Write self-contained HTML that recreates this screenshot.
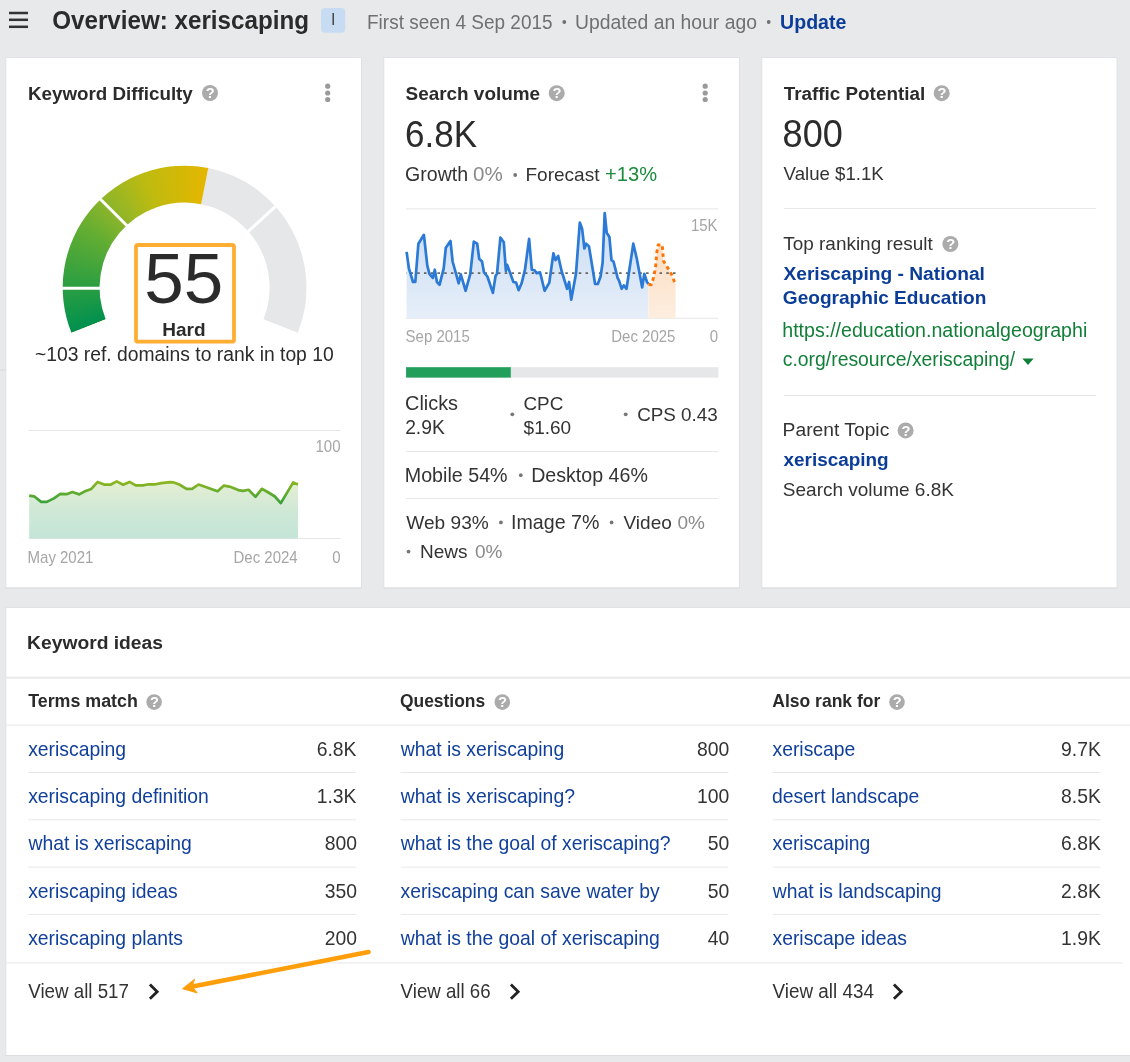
<!DOCTYPE html>
<html><head><meta charset="utf-8"><style>
html,body{margin:0;padding:0;background:#e8e9eb;width:1130px;height:1062px;overflow:hidden}
body{position:relative}
.ov{position:absolute;left:0;top:0}
svg{display:block;font-family:"Liberation Sans",sans-serif;will-change:transform}
</style></head><body>
<svg width="1130" height="1062" viewBox="0 0 1130 1062">
<rect x="9" y="11.75" width="19" height="2.5" fill="#333" />
<rect x="9" y="18.55" width="19" height="2.5" fill="#333" />
<rect x="9" y="25.55" width="19" height="2.5" fill="#333" />
<text x="52.21" y="28.60" font-size="24.2" font-weight="bold" fill="#2b2b2b"  transform="matrix(1 0 0 1.06 0 -1.716)">Overview: xeriscaping</text>
<rect x="321" y="8" width="24.3" height="24.7" fill="#c7dcf3" rx="4"/>
<text x="333.20" y="25.30" font-size="16" font-weight="normal" fill="#444" text-anchor="middle" >I</text>
<text x="367.04" y="28.80" font-size="18.97" font-weight="normal" fill="#707070"  transform="matrix(1 0 0 1.08 0 -2.304)">First seen 4 Sep 2015</text>
<circle cx="564.3" cy="22.0" r="1.9" fill="#707070"/>
<text x="575.11" y="28.80" font-size="19.37" font-weight="normal" fill="#707070"  transform="matrix(1 0 0 1.08 0 -2.304)">Updated an hour ago</text>
<circle cx="768.7" cy="22.0" r="1.9" fill="#707070"/>
<text x="780.13" y="28.80" font-size="19.55" font-weight="bold" fill="#0b3d98"  transform="matrix(1 0 0 1.08 0 -2.304)">Update</text>
<rect x="5.8" y="57.5" width="355.7" height="530.5" fill="#fff" stroke="#e1e2e5" stroke-width="1"/>
<rect x="5.3" y="587.6" width="356.7" height="1" fill="#dcdde0" />
<rect x="383.8" y="57.5" width="355.6" height="530.5" fill="#fff" stroke="#e1e2e5" stroke-width="1"/>
<rect x="383.3" y="587.6" width="356.6" height="1" fill="#dcdde0" />
<rect x="761.8" y="57.5" width="355.2" height="530.5" fill="#fff" stroke="#e1e2e5" stroke-width="1"/>
<rect x="761.3" y="587.6" width="356.2" height="1" fill="#dcdde0" />
<rect x="5.8" y="607.5" width="1130" height="448" fill="#fff" stroke="#e1e2e5" stroke-width="1"/>
<rect x="5.3" y="1055.1" width="1125" height="1" fill="#dcdde0" />
<rect x="0" y="369.6" width="5" height="1" fill="#d6d7d9" />
<text x="27.94" y="100.30" font-size="18.8" font-weight="bold" fill="#2b2b2b" >Keyword Difficulty</text>
<circle cx="210" cy="93" r="8" fill="#ababab"/>
<text x="210.3" y="98.2" font-size="14.7" font-weight="bold" fill="#fff" text-anchor="middle">?</text>
<circle cx="327.7" cy="86.2" r="2.6" fill="#9a9a9a"/>
<circle cx="327.7" cy="93" r="2.6" fill="#9a9a9a"/>
<circle cx="327.7" cy="99.5" r="2.6" fill="#9a9a9a"/>
<path d="M208.28,168.02 A121.9,121.9 0 0 1 297.78,332.87 L263.52,319.17 A85.0,85.0 0 0 0 201.11,204.22 Z" fill="#e6e7e9"/>
<rect x="136" y="245" width="98" height="96.7" rx="2" fill="#fff" stroke="#ffad33" stroke-width="3.8"/>
<text x="144.26" y="302.70" font-size="71" font-weight="normal" fill="#2b2b2b" >55</text>
<text x="162.23" y="335.90" font-size="19" font-weight="bold" fill="#2b2b2b" >Hard</text>
<text x="34.93" y="361.00" font-size="19.31" font-weight="normal" fill="#2b2b2b" >~103 ref. domains to rank in top 10</text>
<line x1="28.6" y1="430.5" x2="340.6" y2="430.5" stroke="#e6e6e6" stroke-width="1" />
<line x1="28.6" y1="538.5" x2="340.6" y2="538.5" stroke="#e6e6e6" stroke-width="1" />
<defs><linearGradient id="kdfill" x1="0" y1="478" x2="0" y2="538" gradientUnits="userSpaceOnUse"><stop offset="0" stop-color="#e8f0d2"/><stop offset="0.55" stop-color="#cfe8d6"/><stop offset="1" stop-color="#c3e5d7"/></linearGradient><linearGradient id="kdline" x1="0" y1="480" x2="0" y2="504" gradientUnits="userSpaceOnUse"><stop offset="0" stop-color="#93b81e"/><stop offset="1" stop-color="#35a03e"/></linearGradient></defs>
<path d="M29.2,538.5 L29.2,495.6 34.1,496.3 41.2,501.9 46.8,501.9 53.9,498.4 60.3,493.9 66.6,494.2 72.3,492.0 79.3,494.4 85.0,491.3 91.3,488.9 97.7,481.9 104.7,484.7 110.4,484.7 116.8,481.4 123.1,484.7 129.5,481.9 135.8,485.4 142.9,485.4 148.5,484.3 155.6,484.3 161.2,483.1 170.0,482.1 173.8,482.4 179.3,484.5 186.5,488.8 192.1,488.8 198.5,484.5 206.4,487.2 217.6,491.2 223.9,485.6 229.5,486.6 238.3,490.1 243.0,490.9 248.6,489.8 255.5,496.8 261.8,488.8 268.5,492.5 274.9,496.5 280.8,503.1 293.2,482.4 298.0,484.5 L298,538.5 Z" fill="url(#kdfill)"/>
<polyline points="29.2,495.6 34.1,496.3 41.2,501.9 46.8,501.9 53.9,498.4 60.3,493.9 66.6,494.2 72.3,492.0 79.3,494.4 85.0,491.3 91.3,488.9 97.7,481.9 104.7,484.7 110.4,484.7 116.8,481.4 123.1,484.7 129.5,481.9 135.8,485.4 142.9,485.4 148.5,484.3 155.6,484.3 161.2,483.1 170.0,482.1 173.8,482.4 179.3,484.5 186.5,488.8 192.1,488.8 198.5,484.5 206.4,487.2 217.6,491.2 223.9,485.6 229.5,486.6 238.3,490.1 243.0,490.9 248.6,489.8 255.5,496.8 261.8,488.8 268.5,492.5 274.9,496.5 280.8,503.1 293.2,482.4 298.0,484.5" fill="none" stroke="url(#kdline)" stroke-width="2.7" stroke-linejoin="round"/>
<text x="340.49" y="452.30" font-size="15" font-weight="normal" fill="#a6a6a6" text-anchor="end"  transform="matrix(1 0 0 1.09 0 -40.707)">100</text>
<text x="27.57" y="563.40" font-size="15" font-weight="normal" fill="#a6a6a6"  transform="matrix(1 0 0 1.09 0 -50.706)">May 2021</text>
<text x="297.64" y="563.40" font-size="15" font-weight="normal" fill="#a6a6a6" text-anchor="end"  transform="matrix(1 0 0 1.09 0 -50.706)">Dec 2024</text>
<text x="340.49" y="563.40" font-size="15" font-weight="normal" fill="#a6a6a6" text-anchor="end"  transform="matrix(1 0 0 1.09 0 -50.706)">0</text>
<text x="405.55" y="99.80" font-size="18.92" font-weight="bold" fill="#2b2b2b" >Search volume</text>
<circle cx="556.7" cy="93.2" r="8" fill="#ababab"/>
<text x="557.0" y="98.4" font-size="14.7" font-weight="bold" fill="#fff" text-anchor="middle">?</text>
<circle cx="705.2" cy="86.2" r="2.6" fill="#9a9a9a"/>
<circle cx="705.2" cy="93" r="2.6" fill="#9a9a9a"/>
<circle cx="705.2" cy="99.5" r="2.6" fill="#9a9a9a"/>
<text x="405.12" y="147.20" font-size="35" font-weight="normal" fill="#2b2b2b"  transform="matrix(1 0 0 1.05 0 -7.360)">6.8K</text>
<text x="405.12" y="181.20" font-size="19.56" font-weight="normal" fill="#333" >Growth</text>
<text x="473.00" y="181.20" font-size="20.57" font-weight="normal" fill="#8a8a8a" >0%</text>
<circle cx="515.2" cy="175.0" r="1.9" fill="#777"/>
<text x="525.44" y="181.20" font-size="19.05" font-weight="normal" fill="#333" >Forecast</text>
<text x="605.12" y="181.20" font-size="20.11" font-weight="normal" fill="#1b8c3e" >+13%</text>
<line x1="406" y1="208.9" x2="718.2" y2="208.9" stroke="#e6e6e6" stroke-width="1" />
<line x1="406" y1="318.3" x2="718.2" y2="318.3" stroke="#e6e6e6" stroke-width="1" />
<defs><linearGradient id="svfill" x1="0" y1="210" x2="0" y2="318" gradientUnits="userSpaceOnUse"><stop offset="0" stop-color="#c9dcf3"/><stop offset="1" stop-color="#e6eef9"/></linearGradient><linearGradient id="fcfill" x1="0" y1="240" x2="0" y2="318" gradientUnits="userSpaceOnUse"><stop offset="0" stop-color="#fcdcc0"/><stop offset="1" stop-color="#fdeee0"/></linearGradient></defs>
<path d="M406.6,318.3 L406.6,251.9 408.9,268.3 413.0,282.0 415.3,282.0 418.4,243.7 423.9,234.8 427.3,265.6 429.4,273.8 432.8,277.9 434.8,269.7 436.9,282.0 439.6,284.7 443.7,268.3 445.8,247.8 450.5,241.0 452.6,261.5 458.7,283.3 460.8,274.4 465.6,290.8 470.3,273.8 473.8,241.7 477.2,243.7 479.2,258.7 482.0,261.5 484.0,272.4 487.4,276.5 492.9,292.9 495.6,275.8 497.0,273.8 500.4,237.6 503.8,242.3 505.9,271.0 507.2,264.9 513.4,282.0 516.1,282.6 518.6,290.2 521.6,283.3 525.0,269.7 529.1,238.9 531.8,269.7 534.5,270.3 536.6,273.1 540.0,272.4 541.1,276.5 544.6,290.8 549.3,282.6 553.4,253.3 555.5,260.1 558.2,256.0 561.6,271.0 567.1,288.8 569.1,282.0 571.2,299.7 576.0,273.8 579.8,222.5 582.1,228.7 584.4,248.5 586.2,243.7 589.0,246.4 595.1,284.0 597.8,284.0 600.6,276.5 602.6,262.8 604.7,213.0 606.7,232.8 609.4,236.9 611.5,260.1 613.5,261.5 617.6,277.9 619.0,280.6 621.7,288.8 623.8,285.4 626.5,288.8 633.3,243.7 636.8,258.7 642.2,287.4 644.3,273.8 647.0,282.0 648.4,284.0 L648.4,318.3 Z" fill="url(#svfill)"/>
<path d="M648.4,318.3 L648.5,284.2 651.3,284.7 653.6,277.4 655.3,268.9 656.1,261.0 656.7,253.1 658.1,244.9 662.3,244.9 662.9,253.1 663.5,261.0 667.7,267.8 671.7,274.6 674.5,281.9 675.4,283.5 L675.6,283.5 L675.6,318.3 Z" fill="url(#fcfill)"/>
<line x1="406" y1="273.1" x2="675.8" y2="273.1" stroke="#666" stroke-width="1.9" stroke-dasharray="2.55 4.18" stroke-dashoffset="2.23"/>
<polyline points="406.6,251.9 408.9,268.3 413.0,282.0 415.3,282.0 418.4,243.7 423.9,234.8 427.3,265.6 429.4,273.8 432.8,277.9 434.8,269.7 436.9,282.0 439.6,284.7 443.7,268.3 445.8,247.8 450.5,241.0 452.6,261.5 458.7,283.3 460.8,274.4 465.6,290.8 470.3,273.8 473.8,241.7 477.2,243.7 479.2,258.7 482.0,261.5 484.0,272.4 487.4,276.5 492.9,292.9 495.6,275.8 497.0,273.8 500.4,237.6 503.8,242.3 505.9,271.0 507.2,264.9 513.4,282.0 516.1,282.6 518.6,290.2 521.6,283.3 525.0,269.7 529.1,238.9 531.8,269.7 534.5,270.3 536.6,273.1 540.0,272.4 541.1,276.5 544.6,290.8 549.3,282.6 553.4,253.3 555.5,260.1 558.2,256.0 561.6,271.0 567.1,288.8 569.1,282.0 571.2,299.7 576.0,273.8 579.8,222.5 582.1,228.7 584.4,248.5 586.2,243.7 589.0,246.4 595.1,284.0 597.8,284.0 600.6,276.5 602.6,262.8 604.7,213.0 606.7,232.8 609.4,236.9 611.5,260.1 613.5,261.5 617.6,277.9 619.0,280.6 621.7,288.8 623.8,285.4 626.5,288.8 633.3,243.7 636.8,258.7 642.2,287.4 644.3,273.8 647.0,282.0 648.4,284.0" fill="none" stroke="#2b7ad5" stroke-width="2.7" stroke-linejoin="round"/>
<polyline points="648.5,284.2 651.3,284.7 653.6,277.4 655.3,268.9 656.1,261.0 656.7,253.1 658.1,244.9 662.3,244.9 662.9,253.1 663.5,261.0 667.7,267.8 671.7,274.6 674.5,281.9 675.4,283.5" fill="none" stroke="#ff7300" stroke-width="2.9" stroke-dasharray="3.6 3.4" stroke-linejoin="round"/>
<text x="717.57" y="230.90" font-size="15" font-weight="normal" fill="#a6a6a6" text-anchor="end"  transform="matrix(1 0 0 1.09 0 -20.781)">15K</text>
<text x="405.62" y="341.60" font-size="15" font-weight="normal" fill="#a6a6a6"  transform="matrix(1 0 0 1.09 0 -30.744)">Sep 2015</text>
<text x="675.43" y="341.60" font-size="15" font-weight="normal" fill="#a6a6a6" text-anchor="end"  transform="matrix(1 0 0 1.09 0 -30.744)">Dec 2025</text>
<text x="717.99" y="341.60" font-size="15" font-weight="normal" fill="#a6a6a6" text-anchor="end"  transform="matrix(1 0 0 1.09 0 -30.744)">0</text>
<rect x="406.1" y="367.2" width="312.3" height="10.4" fill="#e6e7e9" />
<rect x="406.1" y="367.2" width="104.7" height="10.4" fill="#22a05b" />
<text x="405.09" y="409.80" font-size="19.85" font-weight="normal" fill="#333" >Clicks</text>
<text x="405.13" y="433.80" font-size="19.29" font-weight="normal" fill="#333" >2.9K</text>
<circle cx="512.3" cy="414.3" r="1.9" fill="#777"/>
<text x="523.44" y="409.80" font-size="18.89" font-weight="normal" fill="#333" >CPC</text>
<text x="523.60" y="433.80" font-size="19.0" font-weight="normal" fill="#333" >$1.60</text>
<circle cx="625.7" cy="414.3" r="1.9" fill="#777"/>
<text x="637.14" y="420.60" font-size="18.83" font-weight="normal" fill="#333" >CPS 0.43</text>
<line x1="406" y1="451.5" x2="718.2" y2="451.5" stroke="#e8e8e8" stroke-width="1" />
<text x="404.79" y="481.50" font-size="19.68" font-weight="normal" fill="#333" >Mobile 54%</text>
<circle cx="520.8" cy="475.2" r="1.9" fill="#777"/>
<text x="531.19" y="481.50" font-size="19.61" font-weight="normal" fill="#333" >Desktop 46%</text>
<line x1="406" y1="498.5" x2="718.2" y2="498.5" stroke="#e8e8e8" stroke-width="1" />
<text x="406.32" y="528.70" font-size="19.1" font-weight="normal" fill="#333" >Web 93%</text>
<circle cx="500.9" cy="522.4" r="1.9" fill="#777"/>
<text x="511.09" y="528.70" font-size="19.61" font-weight="normal" fill="#333" >Image 7%</text>
<circle cx="611.6" cy="522.4" r="1.9" fill="#777"/>
<text x="623.52" y="528.70" font-size="19" font-weight="normal" fill="#333" >Video</text>
<text x="704.98" y="528.70" font-size="19" font-weight="normal" fill="#8a8a8a" text-anchor="end" >0%</text>
<circle cx="408.5" cy="551.6" r="1.9" fill="#777"/>
<text x="419.94" y="557.90" font-size="19" font-weight="normal" fill="#333" >News</text>
<text x="502.48" y="557.90" font-size="19" font-weight="normal" fill="#8a8a8a" text-anchor="end" >0%</text>
<text x="783.69" y="99.70" font-size="18.86" font-weight="bold" fill="#2b2b2b" >Traffic Potential</text>
<circle cx="941.7" cy="93.2" r="8" fill="#ababab"/>
<text x="942.0" y="98.4" font-size="14.7" font-weight="bold" fill="#fff" text-anchor="middle">?</text>
<text x="782.63" y="147.30" font-size="36.07" font-weight="normal" fill="#2b2b2b"  transform="matrix(1 0 0 1.05 0 -7.365)">800</text>
<text x="783.62" y="180.30" font-size="18.64" font-weight="normal" fill="#333" >Value $1.1K</text>
<line x1="784" y1="208.5" x2="1096" y2="208.5" stroke="#e8e8e8" stroke-width="1" />
<text x="783.27" y="250.10" font-size="18.94" font-weight="normal" fill="#333" >Top ranking result</text>
<circle cx="950.4" cy="244.0" r="8" fill="#ababab"/>
<text x="950.6999999999999" y="249.2" font-size="14.7" font-weight="bold" fill="#fff" text-anchor="middle">?</text>
<text x="783.43" y="279.70" font-size="19.2" font-weight="bold" fill="#0b3d98" >Xeriscaping - National</text>
<text x="782.82" y="304.00" font-size="19.08" font-weight="bold" fill="#0b3d98" >Geographic Education</text>
<text x="782.24" y="336.80" font-size="19.6" font-weight="normal" fill="#117f38" >https://education.nationalgeographi</text>
<text x="782.78" y="366.00" font-size="19.37" font-weight="normal" fill="#117f38" >c.org/resource/xeriscaping/</text>
<path d="M1022.3,358.5 L1033.7,358.5 L1028,365 Z" fill="#117f38"/>
<line x1="784" y1="395.5" x2="1096" y2="395.5" stroke="#e8e8e8" stroke-width="1" />
<text x="782.62" y="435.80" font-size="19.26" font-weight="normal" fill="#333" >Parent Topic</text>
<circle cx="905.6" cy="430.4" r="8" fill="#ababab"/>
<text x="905.9" y="435.59999999999997" font-size="14.7" font-weight="bold" fill="#fff" text-anchor="middle">?</text>
<text x="783.47" y="465.60" font-size="18.93" font-weight="bold" fill="#0b3d98" >xeriscaping</text>
<text x="782.84" y="495.70" font-size="19.0" font-weight="normal" fill="#333" >Search volume 6.8K</text>
<text x="27.11" y="648.70" font-size="19.25" font-weight="bold" fill="#2b2b2b" >Keyword ideas</text>
<rect x="6" y="676.5" width="1124" height="2.5" fill="#ececec" />
<rect x="6" y="724.6" width="1124" height="1" fill="#e8e8e8" />
<text x="28.20" y="706.90" font-size="17.84" font-weight="bold" fill="#2b2b2b" >Terms match</text>
<circle cx="154.1" cy="702.1" r="7.8" fill="#ababab"/>
<text x="154.4" y="707.3000000000001" font-size="14.7" font-weight="bold" fill="#fff" text-anchor="middle">?</text>
<text x="28.18" y="755.70" font-size="19.35" font-weight="normal" fill="#11409a" >xeriscaping</text>
<text x="356.52" y="755.70" font-size="19.35" font-weight="normal" fill="#333" text-anchor="end" >6.8K</text>
<line x1="28.4" y1="772.5" x2="356.3" y2="772.5" stroke="#e8e8e8" stroke-width="1" />
<text x="28.18" y="803.00" font-size="19.35" font-weight="normal" fill="#11409a" >xeriscaping definition</text>
<text x="356.52" y="803.00" font-size="19.35" font-weight="normal" fill="#333" text-anchor="end" >1.3K</text>
<line x1="28.4" y1="819.8" x2="356.3" y2="819.8" stroke="#e8e8e8" stroke-width="1" />
<text x="28.43" y="850.30" font-size="19.35" font-weight="normal" fill="#11409a" >what is xeriscaping</text>
<text x="357.06" y="850.30" font-size="19.35" font-weight="normal" fill="#333" text-anchor="end" >800</text>
<line x1="28.4" y1="867.1" x2="356.3" y2="867.1" stroke="#e8e8e8" stroke-width="1" />
<text x="28.18" y="897.60" font-size="19.35" font-weight="normal" fill="#11409a" >xeriscaping ideas</text>
<text x="357.06" y="897.60" font-size="19.35" font-weight="normal" fill="#333" text-anchor="end" >350</text>
<line x1="28.4" y1="914.4" x2="356.3" y2="914.4" stroke="#e8e8e8" stroke-width="1" />
<text x="28.18" y="944.90" font-size="19.35" font-weight="normal" fill="#11409a" >xeriscaping plants</text>
<text x="357.06" y="944.90" font-size="19.35" font-weight="normal" fill="#333" text-anchor="end" >200</text>
<text x="28.32" y="998.10" font-size="18.74" font-weight="normal" fill="#333"  transform="matrix(1 0 0 1.06 0 -59.886)">View all 517</text>
<text x="399.99" y="706.90" font-size="17.43" font-weight="bold" fill="#2b2b2b" >Questions</text>
<circle cx="502.3" cy="702.1" r="7.8" fill="#ababab"/>
<text x="502.6" y="707.3000000000001" font-size="14.7" font-weight="bold" fill="#fff" text-anchor="middle">?</text>
<text x="400.73" y="755.70" font-size="19.35" font-weight="normal" fill="#11409a" >what is xeriscaping</text>
<text x="729.16" y="755.70" font-size="19.35" font-weight="normal" fill="#333" text-anchor="end" >800</text>
<line x1="400.7" y1="772.5" x2="728.4" y2="772.5" stroke="#e8e8e8" stroke-width="1" />
<text x="400.73" y="803.00" font-size="19.35" font-weight="normal" fill="#11409a" >what is xeriscaping?</text>
<text x="729.16" y="803.00" font-size="19.35" font-weight="normal" fill="#333" text-anchor="end" >100</text>
<line x1="400.7" y1="819.8" x2="728.4" y2="819.8" stroke="#e8e8e8" stroke-width="1" />
<text x="400.73" y="850.30" font-size="19.35" font-weight="normal" fill="#11409a" >what is the goal of xeriscaping?</text>
<text x="729.16" y="850.30" font-size="19.35" font-weight="normal" fill="#333" text-anchor="end" >50</text>
<line x1="400.7" y1="867.1" x2="728.4" y2="867.1" stroke="#e8e8e8" stroke-width="1" />
<text x="400.48" y="897.60" font-size="19.35" font-weight="normal" fill="#11409a" >xeriscaping can save water by</text>
<text x="729.16" y="897.60" font-size="19.35" font-weight="normal" fill="#333" text-anchor="end" >50</text>
<line x1="400.7" y1="914.4" x2="728.4" y2="914.4" stroke="#e8e8e8" stroke-width="1" />
<text x="400.73" y="944.90" font-size="19.35" font-weight="normal" fill="#11409a" >what is the goal of xeriscaping</text>
<text x="729.16" y="944.90" font-size="19.35" font-weight="normal" fill="#333" text-anchor="end" >40</text>
<text x="400.62" y="998.10" font-size="18.68" font-weight="normal" fill="#333"  transform="matrix(1 0 0 1.06 0 -59.886)">View all 66</text>
<text x="772.26" y="706.90" font-size="17.53" font-weight="bold" fill="#2b2b2b" >Also rank for</text>
<circle cx="897.0" cy="702.1" r="7.8" fill="#ababab"/>
<text x="897.3" y="707.3000000000001" font-size="14.7" font-weight="bold" fill="#fff" text-anchor="middle">?</text>
<text x="772.48" y="755.70" font-size="19.35" font-weight="normal" fill="#11409a" >xeriscape</text>
<text x="1100.82" y="755.70" font-size="19.35" font-weight="normal" fill="#333" text-anchor="end" >9.7K</text>
<line x1="772.7" y1="772.5" x2="1100.6" y2="772.5" stroke="#e8e8e8" stroke-width="1" />
<text x="771.89" y="803.00" font-size="19.35" font-weight="normal" fill="#11409a" >desert landscape</text>
<text x="1100.82" y="803.00" font-size="19.35" font-weight="normal" fill="#333" text-anchor="end" >8.5K</text>
<line x1="772.7" y1="819.8" x2="1100.6" y2="819.8" stroke="#e8e8e8" stroke-width="1" />
<text x="772.48" y="850.30" font-size="19.35" font-weight="normal" fill="#11409a" >xeriscaping</text>
<text x="1100.82" y="850.30" font-size="19.35" font-weight="normal" fill="#333" text-anchor="end" >6.8K</text>
<line x1="772.7" y1="867.1" x2="1100.6" y2="867.1" stroke="#e8e8e8" stroke-width="1" />
<text x="772.73" y="897.60" font-size="19.35" font-weight="normal" fill="#11409a" >what is landscaping</text>
<text x="1100.82" y="897.60" font-size="19.35" font-weight="normal" fill="#333" text-anchor="end" >2.8K</text>
<line x1="772.7" y1="914.4" x2="1100.6" y2="914.4" stroke="#e8e8e8" stroke-width="1" />
<text x="772.48" y="944.90" font-size="19.35" font-weight="normal" fill="#11409a" >xeriscape ideas</text>
<text x="1100.82" y="944.90" font-size="19.35" font-weight="normal" fill="#333" text-anchor="end" >1.9K</text>
<text x="772.62" y="998.10" font-size="18.86" font-weight="normal" fill="#333"  transform="matrix(1 0 0 1.06 0 -59.886)">View all 434</text>
<rect x="6" y="962.4" width="1117" height="1" fill="#e8e8e8" />
<polyline points="149.9,984.6 157.20000000000002,991.7 149.9,998.8" fill="none" stroke="#222" stroke-width="2.8" stroke-linecap="butt" stroke-linejoin="miter"/>
<polyline points="510.90000000000003,984.6 518.2,991.7 510.90000000000003,998.8" fill="none" stroke="#222" stroke-width="2.8" stroke-linecap="butt" stroke-linejoin="miter"/>
<polyline points="893.9,984.6 901.1999999999999,991.7 893.9,998.8" fill="none" stroke="#222" stroke-width="2.8" stroke-linecap="butt" stroke-linejoin="miter"/>
<line x1="368.5" y1="952.1" x2="190" y2="987" stroke="#ff9e0b" stroke-width="4.6" stroke-linecap="round"/>
<path d="M182.6,988.7 L194.6,979.2 L192.2,986.6 L197.2,992.9 Z" fill="#ff9e0b" stroke="#ff9e0b" stroke-width="1" stroke-linejoin="round"/>
</svg>
<div class="ov" style="width:1130px;height:1062px;background:conic-gradient(from 248.2deg at 184.6px 287.6px, #00904f 0.0deg, #2a9e42 21.8deg, #62ad32 51.8deg, #8cb52a 68.4deg, #bebb10 91.8deg, #e4b600 123.0deg, #e4b600 360deg);clip-path:path('M71.42,332.87 A121.9,121.9 0 0 1 208.28,168.02 L201.11,204.22 A85.0,85.0 0 0 0 105.68,319.17 Z')"></div>
<svg class="ov" width="1130" height="1062" style="pointer-events:none"><g stroke="#fff" stroke-width="3"><line x1="58" y1="288.3" x2="104" y2="288.3"/><line x1="96" y1="194.8" x2="129.5" y2="228.3"/><line x1="279.1" y1="203.1" x2="246.6" y2="232.9"/></g></svg>
</body></html>
